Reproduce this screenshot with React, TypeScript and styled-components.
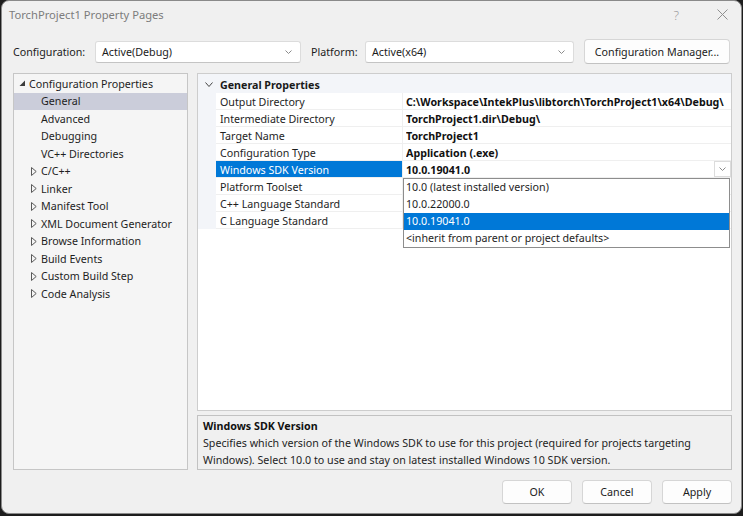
import React from 'react';
import styled, { createGlobalStyle } from 'styled-components';

const FONT = `'Noto Sans', 'Open Sans', sans-serif`;

const Global = createGlobalStyle`
  html, body { margin: 0; padding: 0; background: #1d1d1d; }
  body { width: 743px; height: 516px; overflow: hidden; font-family: ${FONT}; font-size: 10.7px; color: #000; }
  #root { width: 743px; height: 516px; }
  * { box-sizing: border-box; }
`;

const Window = styled.div`
  margin-left: 1px;
  width: 741px;
  height: 514px;
  background: #f0f0f0;
  border: 1px solid #8a8a8a;
  border-radius: 8px;
  display: flex;
  flex-direction: column;
  padding: 0 9px 0 11px;
`;

const TitleBar = styled.div`
  height: 28px;
  display: flex;
  align-items: center;
  margin: 0 -9px 0 -4px;
  padding-bottom: 1px;
`;

const TitleText = styled.div`
  flex: 1;
  color: #7c7c7c;
  font-size: 11.2px;
`;

const HelpGlyph = styled.div`
  color: #9a9a9a;
  font-size: 13px;
  font-weight: 300;
  margin-right: 33px;
`;

const CloseBox = styled.div`
  width: 20px;
  height: 20px;
  margin-right: 9px;
  display: flex;
  align-items: center;
  justify-content: center;
`;

const ConfigBar = styled.div`
  margin-top: 10px;
  height: 25px;
  display: flex;
  align-items: center;
`;

const FieldLabel = styled.div<{ $w: number; $ml?: number }>`
  width: ${p => p.$w}px;
  margin-left: ${p => p.$ml ?? 0}px;
  color: #1b1b1b;
  white-space: nowrap;
`;

const Combo = styled.div<{ $w: number }>`
  width: ${p => p.$w}px;
  height: 22px;
  background: #fff;
  border: 1px solid #dcdcdc;
  border-bottom-color: #c4c4c4;
  border-radius: 3px;
  display: flex;
  align-items: center;
  padding: 0 8px 0 6px;
`;

const ComboText = styled.div`
  flex: 1;
  color: #1b1b1b;
`;

const ManagerButton = styled.div`
  margin-left: 10px;
  width: 146px;
  height: 25px;
  background: #fdfdfd;
  border: 1px solid #d6d6d6;
  border-bottom-color: #c2c2c2;
  border-radius: 4px;
  display: flex;
  align-items: center;
  justify-content: center;
  color: #1b1b1b;
`;

const Main = styled.div`
  margin-top: 9px;
  height: 397px;
  display: flex;
  gap: 9px;
`;

const Tree = styled.div`
  flex: none;
  width: 175px;
  background: #f5f5f5;
  border: 1px solid #c6c6c6;
  padding-top: 1px;
`;

const TreeItem = styled.div<{ $level: number; $selected?: boolean }>`
  height: 17.5px;
  display: flex;
  align-items: center;
  padding-left: ${p => (p.$level === 0 ? 5 : 17)}px;
  background: ${p => (p.$selected ? '#cbcdda' : 'transparent')};
  color: #1e1e1e;
  white-space: nowrap;
`;

const Expander = styled.div`
  width: 10px;
  height: 17px;
  display: flex;
  align-items: center;
`;

const RightCol = styled.div`
  flex: 1;
  min-width: 0;
  display: flex;
  flex-direction: column;
  gap: 4px;
`;

const PropGrid = styled.div`
  position: relative;
  height: 338px;
  background: #fff;
  border: 1px solid #cdcdcd;
`;

const GroupHeader = styled.div`
  height: 19px;
  background: #f3f5f9;
  display: flex;
  align-items: center;
  padding: 2px 0 0 7px;
  font-weight: 700;
  color: #1a1a1a;
  gap: 7px;
`;

const PropRow = styled.div`
  height: 17px;
  display: flex;
`;

const IndentCell = styled.div`
  flex: none;
  width: 18px;
  background: #f3f5f9;
`;

const LabelCell = styled.div<{ $selected?: boolean }>`
  flex: none;
  width: 187px;
  padding: 1px 0 0 4px;
  line-height: 16px;
  border-bottom: 1px solid #efefef;
  border-right: 1px solid #efefef;
  background: ${p => (p.$selected ? '#0078d7' : '#fff')};
  color: ${p => (p.$selected ? '#fff' : '#1e1e1e')};
  white-space: nowrap;
  overflow: hidden;
`;

const ValueCell = styled.div`
  flex: 1;
  min-width: 0;
  display: flex;
  align-items: center;
  padding-left: 3px;
  border-bottom: 1px solid #efefef;
  font-weight: 700;
  color: #111;
  white-space: nowrap;
  overflow: hidden;
`;

const ValueText = styled.div`
  flex: 1;
  min-width: 0;
  overflow: hidden;
  padding-top: 2px;
`;

const DropButton = styled.div`
  flex: none;
  width: 17px;
  height: 16px;
  border: 1px solid #dcdcdc;
  display: flex;
  align-items: center;
  justify-content: center;
  background: #fff;
`;

const DropList = styled.div`
  position: absolute;
  left: 205px;
  top: 104px;
  width: 327px;
  background: #fff;
  border: 1px solid #8d8d8d;
`;

const DropItem = styled.div<{ $selected?: boolean }>`
  height: 17px;
  line-height: 17px;
  padding-left: 2px;
  background: ${p => (p.$selected ? '#0078d7' : '#fff')};
  color: ${p => (p.$selected ? '#fff' : '#1e1e1e')};
  white-space: nowrap;
`;

const DescBox = styled.div`
  height: 55px;
  background: #f0f0f0;
  border: 1px solid #c2c2c2;
  padding: 2px 5px 0;
  line-height: 17px;
  color: #1e1e1e;
`;

const DescTitle = styled.div`
  font-weight: 700;
  color: #111;
`;

const ButtonBar = styled.div`
  margin-top: 10px;
  height: 24px;
  display: flex;
  justify-content: flex-end;
  gap: 10px;
`;

const DlgButton = styled.div`
  width: 70px;
  height: 24px;
  background: #fdfdfd;
  border: 1px solid #d6d6d6;
  border-bottom-color: #c2c2c2;
  border-radius: 4px;
  display: flex;
  align-items: center;
  justify-content: center;
  color: #1b1b1b;
`;

const Chevron = ({ w, h, color }: { w: number; h: number; color: string }) => (
  <svg width={w} height={h} viewBox={`0 0 ${w} ${h}`}>
    <polyline points={`0.5,0.5 ${w / 2},${h - 0.5} ${w - 0.5},0.5`} fill="none" stroke={color} strokeWidth="1" />
  </svg>
);

const ExpandedTri = () => (
  <svg width="7" height="7" viewBox="0 0 7 7">
    <polygon points="6,0.5 6,6 0.5,6" fill="#3c3c3c" />
  </svg>
);

const CollapsedTri = () => (
  <svg width="6" height="9" viewBox="0 0 6 9">
    <polygon points="0.5,0.5 5.2,4.5 0.5,8.5" fill="none" stroke="#5a5a5a" strokeWidth="1" />
  </svg>
);

type Node = { label: string; level: number; kind: 'open' | 'closed' | 'leaf'; selected?: boolean };

const treeNodes: Node[] = [
  { label: 'Configuration Properties', level: 0, kind: 'open' },
  { label: 'General', level: 1, kind: 'leaf', selected: true },
  { label: 'Advanced', level: 1, kind: 'leaf' },
  { label: 'Debugging', level: 1, kind: 'leaf' },
  { label: 'VC++ Directories', level: 1, kind: 'leaf' },
  { label: 'C/C++', level: 1, kind: 'closed' },
  { label: 'Linker', level: 1, kind: 'closed' },
  { label: 'Manifest Tool', level: 1, kind: 'closed' },
  { label: 'XML Document Generator', level: 1, kind: 'closed' },
  { label: 'Browse Information', level: 1, kind: 'closed' },
  { label: 'Build Events', level: 1, kind: 'closed' },
  { label: 'Custom Build Step', level: 1, kind: 'closed' },
  { label: 'Code Analysis', level: 1, kind: 'closed' },
];

const props: { label: string; value: string; selected?: boolean }[] = [
  { label: 'Output Directory', value: 'C:\\Workspace\\IntekPlus\\libtorch\\TorchProject1\\x64\\Debug\\' },
  { label: 'Intermediate Directory', value: 'TorchProject1.dir\\Debug\\' },
  { label: 'Target Name', value: 'TorchProject1' },
  { label: 'Configuration Type', value: 'Application (.exe)' },
  { label: 'Windows SDK Version', value: '10.0.19041.0', selected: true },
  { label: 'Platform Toolset', value: '' },
  { label: 'C++ Language Standard', value: '' },
  { label: 'C Language Standard', value: '' },
];

const options = [
  { text: '10.0 (latest installed version)' },
  { text: '10.0.22000.0' },
  { text: '10.0.19041.0', selected: true },
  { text: '<inherit from parent or project defaults>' },
];

export default function App() {
  return (
    <>
      <Global />
      <Window>
        <TitleBar>
          <TitleText>TorchProject1 Property Pages</TitleText>
          <HelpGlyph>?</HelpGlyph>
          <CloseBox>
            <svg width="11" height="11" viewBox="0 0 11 11">
              <path d="M0.5 0.5 L10.5 10.5 M10.5 0.5 L0.5 10.5" stroke="#8f8f8f" strokeWidth="1" />
            </svg>
          </CloseBox>
        </TitleBar>

        <ConfigBar>
          <FieldLabel $w={82}>Configuration:</FieldLabel>
          <Combo $w={206}>
            <ComboText>Active(Debug)</ComboText>
            <Chevron w={7} h={4} color="#8a8a8a" />
          </Combo>
          <FieldLabel $w={54} $ml={10}>Platform:</FieldLabel>
          <Combo $w={209}>
            <ComboText>Active(x64)</ComboText>
            <Chevron w={7} h={4} color="#8a8a8a" />
          </Combo>
          <ManagerButton>Configuration Manager...</ManagerButton>
        </ConfigBar>

        <Main>
          <Tree>
            {treeNodes.map(n => (
              <TreeItem key={n.label} $level={n.level} $selected={n.selected}>
                <Expander>
                  {n.kind === 'open' && <ExpandedTri />}
                  {n.kind === 'closed' && <CollapsedTri />}
                </Expander>
                {n.label}
              </TreeItem>
            ))}
          </Tree>

          <RightCol>
            <PropGrid>
              <GroupHeader>
                <Chevron w={8} h={5} color="#444" />
                General Properties
              </GroupHeader>
              {props.map(p => (
                <PropRow key={p.label}>
                  <IndentCell />
                  <LabelCell $selected={p.selected}>{p.label}</LabelCell>
                  <ValueCell>
                    <ValueText>{p.value}</ValueText>
                    {p.selected && (
                      <DropButton>
                        <Chevron w={7} h={4} color="#8a8a8a" />
                      </DropButton>
                    )}
                  </ValueCell>
                </PropRow>
              ))}
              <DropList>
                {options.map(o => (
                  <DropItem key={o.text} $selected={o.selected}>{o.text}</DropItem>
                ))}
              </DropList>
            </PropGrid>
            <DescBox>
              <DescTitle>Windows SDK Version</DescTitle>
              <div>Specifies which version of the Windows SDK to use for this project (required for projects targeting</div>
              <div>Windows). Select 10.0 to use and stay on latest installed Windows 10 SDK version.</div>
            </DescBox>
          </RightCol>
        </Main>

        <ButtonBar>
          <DlgButton>OK</DlgButton>
          <DlgButton>Cancel</DlgButton>
          <DlgButton>Apply</DlgButton>
        </ButtonBar>
      </Window>
    </>
  );
}
